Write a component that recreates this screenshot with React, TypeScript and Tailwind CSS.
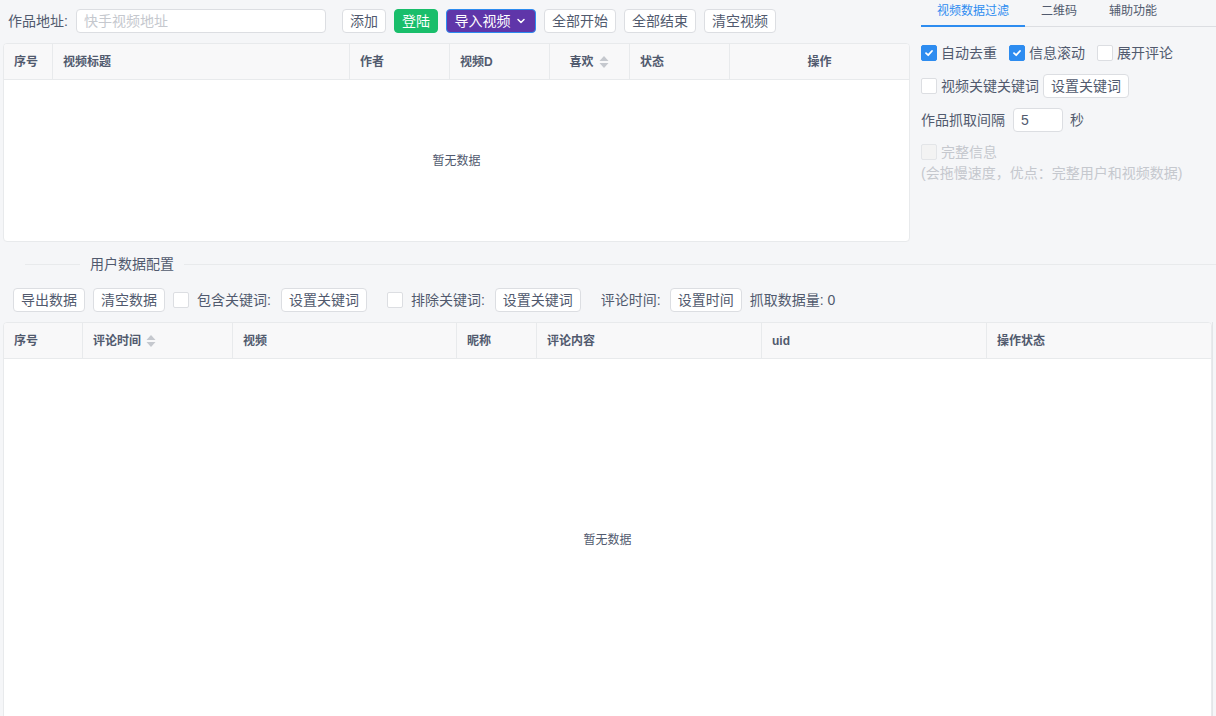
import React from "react";

const font = "font-['Liberation_Sans','Noto_Sans_CJK_SC',sans-serif]";

const Btn = ({ children, className = "" }: { children: React.ReactNode; className?: string }) => (
  <button
    className={`h-[24px] px-[7px] rounded-[4px] border border-[#dcdee2] bg-white text-[14px] leading-[22px] text-[#515a6e] whitespace-nowrap ${className}`}
  >
    {children}
  </button>
);

const Check = ({ checked = false, disabled = false }: { checked?: boolean; disabled?: boolean }) => (
  <span
    className={`w-[16px] h-[16px] shrink-0 rounded-[2px] border flex items-center justify-center ${
      checked ? "bg-[#2d8cf0] border-[#2d8cf0]" : disabled ? "bg-[#f3f3f3] border-[#e3e5e8]" : "bg-white border-[#dcdee2]"
    }`}
  >
    {checked && (
      <svg width="10" height="10" viewBox="0 0 10 10">
        <path d="M2 5.2 L4.2 7.2 L8 3" fill="none" stroke="white" strokeWidth="1.8" strokeLinecap="round" strokeLinejoin="round" />
      </svg>
    )}
  </span>
);

const Sort = () => (
  <svg width="12" height="18" viewBox="0 0 12 18" className="ml-[4px]">
    <path d="M6 3 L10.5 8 L1.5 8 Z" fill="#c5c8ce" />
    <path d="M6 15 L10.5 10 L1.5 10 Z" fill="#c5c8ce" />
  </svg>
);

type Col = { title: string; w: string; center?: boolean; sort?: boolean; last?: boolean };

const Table = ({ cols, className }: { cols: Col[]; className: string }) => (
  <div className={`bg-white border border-[#e8eaec] rounded-[4px] flex flex-col overflow-hidden ${className}`}>
    <div className="flex h-[36px] shrink-0 bg-[#f8f8f9] border-b border-[#e8eaec]">
      {cols.map((c) => (
        <div
          key={c.title}
          className={`${c.w} flex items-center px-[10px] text-[12px] font-bold text-[#515a6e] ${
            c.center ? "justify-center" : ""
          } ${c.last ? "" : "border-r border-[#e8eaec]"}`}
        >
          {c.title}
          {c.sort && <Sort />}
        </div>
      ))}
    </div>
    <div className="flex-1 flex items-center justify-center text-[12px] text-[#515a6e]">暂无数据</div>
  </div>
);

const videoCols: Col[] = [
  { title: "序号", w: "w-[49px]" },
  { title: "视频标题", w: "w-[297px]" },
  { title: "作者", w: "w-[100px]" },
  { title: "视频D", w: "w-[100px]" },
  { title: "喜欢", w: "w-[80px]", center: true, sort: true },
  { title: "状态", w: "w-[100px]" },
  { title: "操作", w: "flex-1", center: true, last: true },
];

const userCols: Col[] = [
  { title: "序号", w: "w-[79px]" },
  { title: "评论时间", w: "w-[150px]", sort: true },
  { title: "视频", w: "w-[224px]" },
  { title: "昵称", w: "w-[80px]" },
  { title: "评论内容", w: "w-[225px]" },
  { title: "uid", w: "w-[225px]" },
  { title: "操作状态", w: "flex-1", last: true },
];

export default function App() {
  return (
    <div className={`w-[1216px] h-[716px] overflow-hidden bg-[#f5f6f8] ${font}`}>
      <div className="flex">
        {/* left: video list */}
        <div className="w-[910px] shrink-0">
          <div className="flex items-center pt-[9px] pl-[8px]">
            <span className="text-[14px] text-[#515a6e]">作品地址:</span>
            <input
              placeholder="快手视频地址"
              className="ml-[8px] w-[250px] h-[24px] px-[7px] rounded-[4px] border border-[#dcdee2] bg-white text-[14px] text-[#515a6e] placeholder:text-[#c5c8ce] outline-none"
            />
            <div className="ml-[16px] flex gap-[8px]">
              <Btn className="w-[44px]">添加</Btn>
              <Btn className="w-[44px] !bg-[#19be6b] !border-[#19be6b] !text-white">登陆</Btn>
              <Btn className="w-[90px] !bg-[#5f36a9] !border-[#2d8cf0] !text-white flex items-center justify-center gap-[5px]">
                导入视频
                <svg width="12" height="12" viewBox="0 0 12 12">
                  <path d="M3 4.5 L6 7.5 L9 4.5" fill="none" stroke="white" strokeWidth="1.5" strokeLinecap="round" strokeLinejoin="round" />
                </svg>
              </Btn>
              <Btn className="w-[72px]">全部开始</Btn>
              <Btn className="w-[72px]">全部结束</Btn>
              <Btn className="w-[72px]">清空视频</Btn>
            </div>
          </div>
          <Table cols={videoCols} className="mt-[10px] ml-[3px] h-[199px]" />
        </div>

        {/* right: filter panel */}
        <div className="ml-[11px] flex-1">
          <div className="flex h-[27px] border-b border-[#dcdee2] text-[12px]">
            <div className="relative px-[16px] pt-[3px] leading-[16px] text-[#2d8cf0]">
              视频数据过滤
              <span className="absolute left-0 right-0 bottom-[-1px] h-[2px] bg-[#2d8cf0]" />
            </div>
            <div className="px-[16px] pt-[3px] leading-[16px] text-[#515a6e]">二维码</div>
            <div className="px-[16px] pt-[3px] leading-[16px] text-[#515a6e]">辅助功能</div>
          </div>

          <div className="mt-[18px] flex items-center h-[16px] text-[14px] text-[#515a6e]">
            <Check checked />
            <span className="ml-[4px]">自动去重</span>
            <span className="ml-[12px]"><Check checked /></span>
            <span className="ml-[4px]">信息滚动</span>
            <span className="ml-[12px]"><Check /></span>
            <span className="ml-[4px]">展开评论</span>
          </div>

          <div className="mt-[13px] flex items-center h-[24px] text-[14px] text-[#515a6e]">
            <Check />
            <span className="ml-[4px]">视频关键关键词</span>
            <Btn className="ml-[4px]">设置关键词</Btn>
          </div>

          <div className="mt-[10px] flex items-center h-[24px] text-[14px] text-[#515a6e]">
            <span>作品抓取间隔</span>
            <input
              defaultValue="5"
              className="ml-[8px] w-[50px] h-[24px] px-[7px] rounded-[4px] border border-[#dcdee2] bg-white text-[14px] text-[#515a6e] outline-none"
            />
            <span className="ml-[7px]">秒</span>
          </div>

          <div className="mt-[12px] flex items-center h-[16px] text-[14px] text-[#c5c8ce]">
            <Check disabled />
            <span className="ml-[4px]">完整信息</span>
          </div>
          <div className="mt-[3px] leading-[20px] text-[14px] text-[#c5c8ce]">(会拖慢速度，优点：完整用户和视频数据)</div>
        </div>
      </div>

      {/* divider */}
      <div className="h-[45px] flex items-center pl-[25px]">
        <span className="w-[55px] h-px bg-[#e8eaec]" />
        <span className="px-[10px] text-[14px] text-[#515a6e]">用户数据配置</span>
        <span className="flex-1 h-px bg-[#e8eaec]" />
      </div>

      {/* user toolbar */}
      <div className="mt-[1px] flex items-center h-[24px] pl-[13px] text-[14px] text-[#515a6e]">
        <Btn>导出数据</Btn>
        <Btn className="ml-[8px]">清空数据</Btn>
        <span className="ml-[8px]"><Check /></span>
        <span className="ml-[8px]">包含关键词:</span>
        <Btn className="ml-[10px]">设置关键词</Btn>
        <span className="ml-[20px]"><Check /></span>
        <span className="ml-[8px]">排除关键词:</span>
        <Btn className="ml-[10px]">设置关键词</Btn>
        <span className="ml-[20px]">评论时间:</span>
        <Btn className="ml-[9px]">设置时间</Btn>
        <span className="ml-[8px]">抓取数据量: 0</span>
      </div>

      <div className="flex">
        <Table cols={userCols} className="mt-[10px] ml-[3px] w-[1209px] h-[400px]" />
        <div className="flex-1 mt-[10px] border-l border-[#e3e5e8]" />
      </div>
    </div>
  );
}
